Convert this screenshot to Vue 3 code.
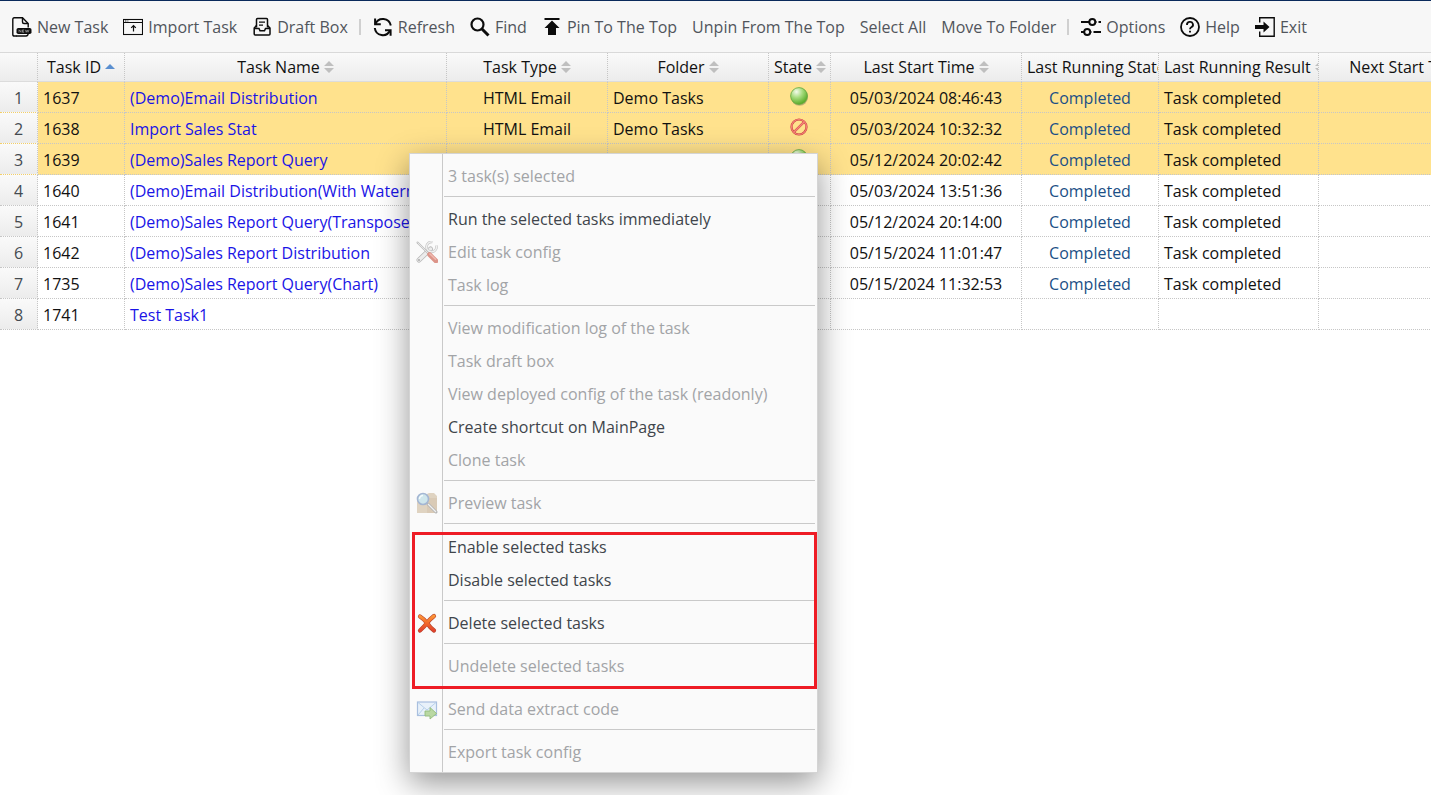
<script setup>
const tools = [
  { label: 'New Task', icon: 'new' },
  { label: 'Import Task', icon: 'import' },
  { label: 'Draft Box', icon: 'draft' },
  { divider: true },
  { label: 'Refresh', icon: 'refresh' },
  { label: 'Find', icon: 'find' },
  { label: 'Pin To The Top', icon: 'pin' },
  { label: 'Unpin From The Top' },
  { label: 'Select All' },
  { label: 'Move To Folder' },
  { divider: true },
  { label: 'Options', icon: 'options' },
  { label: 'Help', icon: 'help' },
  { label: 'Exit', icon: 'exit' }
]

const columns = [
  { label: 'Task ID', sorted: true },
  { label: 'Task Name' },
  { label: 'Task Type' },
  { label: 'Folder' },
  { label: 'State' },
  { label: 'Last Start Time' },
  { label: 'Last Running State' },
  { label: 'Last Running Result' },
  { label: 'Next Start Time' }
]

const rows = [
  { id: 1637, name: '(Demo)Email Distribution', type: 'HTML Email', folder: 'Demo Tasks', state: 'on', start: '05/03/2024 08:46:43', selected: true },
  { id: 1638, name: 'Import Sales Stat', type: 'HTML Email', folder: 'Demo Tasks', state: 'off', start: '05/03/2024 10:32:32', selected: true },
  { id: 1639, name: '(Demo)Sales Report Query', type: 'HTML Email', folder: 'Demo Tasks', state: 'on', start: '05/12/2024 20:02:42', selected: true },
  { id: 1640, name: '(Demo)Email Distribution(With Watermark)', start: '05/03/2024 13:51:36' },
  { id: 1641, name: '(Demo)Sales Report Query(Transpose)', start: '05/12/2024 20:14:00' },
  { id: 1642, name: '(Demo)Sales Report Distribution', start: '05/15/2024 11:01:47' },
  { id: 1735, name: '(Demo)Sales Report Query(Chart)', start: '05/15/2024 11:32:53' },
  { id: 1741, name: 'Test Task1' }
]

const sections = [
  { groups: [
    [{ label: '3 task(s) selected', off: true }],
    [{ label: 'Run the selected tasks immediately' }, { label: 'Edit task config', off: true, icon: 'tools' }, { label: 'Task log', off: true }],
    [
      { label: 'View modification log of the task', off: true },
      { label: 'Task draft box', off: true },
      { label: 'View deployed config of the task (readonly)', off: true },
      { label: 'Create shortcut on MainPage' },
      { label: 'Clone task', off: true }
    ],
    [{ label: 'Preview task', off: true, icon: 'preview' }]
  ] },
  { marked: true, groups: [
    [{ label: 'Enable selected tasks' }, { label: 'Disable selected tasks' }],
    [{ label: 'Delete selected tasks', icon: 'delete' }],
    [{ label: 'Undelete selected tasks', off: true }]
  ] },
  { groups: [
    [{ label: 'Send data extract code', off: true, icon: 'send' }],
    [{ label: 'Export task config', off: true }]
  ] }
]
</script>

<template>
  <div class="page">
    <nav class="toolbar">
      <template v-for="(t, i) in tools" :key="i">
        <span v-if="t.divider" class="divider"></span>
        <button v-else type="button" class="tool">
          <svg v-if="t.icon" class="tool-icon" viewBox="0 0 20 20" fill="none" stroke="#0c0c0c" stroke-width="1.5" aria-hidden="true">
            <g v-if="t.icon === 'new'">
              <path d="M5 19H2.2Q.8 19 .8 17.600V2.200Q.8.8 2.200.8H10.500L16.200 6.500V10.500" stroke-width="1.400" />
              <path d="M10.500 1V5Q10.500 6.500 12 6.500H16" stroke-width="1.400" />
              <rect x="4.500" y="11" width="15" height="6" rx="1.800" fill="#0c0c0c" stroke="none" />
              <path d="M4.500 19H14Q16.200 19 16.200 16" stroke-width="1.400" />
              <path d="M7 15.500V12.800L9 15.300V12.800M12.200 12.900H10.500V15.300H12.200M10.500 14.100H12M13.500 12.800L14.200 15.300L15.200 13.100L16 15.300L17 12.800" stroke="#bbb" stroke-width=".6" />
            </g>
            <g v-else-if="t.icon === 'import'">
              <rect x=".5" y="2.500" width="19" height="15" stroke-width="1.100" />
              <path d="M1 5.500H19" stroke-width="1" />
              <path d="M2 4H5.500" stroke-width=".9" stroke-dasharray="1 .6" />
              <path d="M10.500 14.500V9M8.200 10.800L10.500 8.500L12.800 10.800" stroke-width="1.200" />
            </g>
            <g v-else-if="t.icon === 'draft'">
              <path d="M4.500 10.500V2.500Q4.500 1.500 5.500 1.500H14.500Q15.500 1.500 15.500 2.500V10.500" />
              <path d="M7 5.200H13M7 8.200H11" stroke-width="1.300" />
              <path d="M4.500 8.500L2.200 11V17Q2.200 18 3.200 18H17Q18 18 18 17V11L15.500 8.500M2.200 11.500H7L8 13.800H12.500L13.500 11.500H18" />
            </g>
            <g v-else-if="t.icon === 'refresh'" stroke-width="2">
              <path d="M2.400 7.200A8 8 0 0 1 17.800 8.500" />
              <path d="M2.100 1.500V7.200H7.800" />
              <path d="M1.800 11A8 8 0 0 0 17 13.500" />
              <path d="M12 13.200H17.600V18.800" />
            </g>
            <g v-else-if="t.icon === 'find'">
              <circle cx="7.500" cy="7.500" r="6" stroke-width="2.200" />
              <path d="M12 12L18.500 18.500" stroke-width="3" />
            </g>
            <g v-else-if="t.icon === 'pin'" fill="#0c0c0c" stroke="none">
              <path d="M2.500 1H17.500V3H2.500ZM10 3.500L17.500 11H14V18H6V11H2.500Z" />
            </g>
            <g v-else-if="t.icon === 'options'" stroke-width="2">
              <path d="M0 5H8M14.500 5H15.500M17.500 5H20M0 15H3M9.500 15H20" stroke-width="1.800" />
              <circle cx="11.300" cy="5" r="3" />
              <circle cx="6.200" cy="15" r="3" />
              <path d="M10.500 15H12.500" stroke="#f7f7f7" />
            </g>
            <g v-else-if="t.icon === 'help'">
              <circle cx="10" cy="10" r="9" stroke-width="1.800" />
              <path d="M7 8A3 2.800 0 1 1 11.300 10.200Q10 11 10 12.200" stroke-width="1.800" />
              <path d="M10 13.800V15.600" stroke-width="1.900" />
            </g>
            <g v-else>
              <path d="M4.700 5.500V.8H19.200V19.200H4.700V14.500" stroke-width="1.400" />
              <path d="M0 8H8.500V4.500L14.500 10L8.500 15.500V12H0Z" fill="#0c0c0c" stroke="none" />
            </g>
          </svg>
          <span>{{ t.label }}</span>
        </button>
      </template>
    </nav>

    <div class="grid-wrap">
      <table class="grid">
        <colgroup>
          <col class="w-num" /><col class="w-id" /><col class="w-name" /><col class="w-mid" /><col class="w-mid" />
          <col class="w-state" /><col class="w-time" /><col class="w-run" /><col class="w-result" /><col class="w-time" />
        </colgroup>
        <thead>
          <tr>
            <th></th>
            <th v-for="c in columns" :key="c.label">
              <button type="button" class="sort">
                <span>{{ c.label }}</span>
                <svg class="arrows" viewBox="0 0 10 14" aria-hidden="true">
                  <path v-if="c.sorted" d="M0 9L5 4L10 9Z" fill="#5b8fd0" />
                  <path v-else d="M0 6L5 1L10 6ZM0 8H10L5 13Z" fill="#bfbfbf" />
                </svg>
              </button>
            </th>
          </tr>
        </thead>
        <tbody>
          <tr v-for="(r, i) in rows" :key="r.id" :class="{ selected: r.selected }">
            <th scope="row">{{ i + 1 }}</th>
            <td>{{ r.id }}</td>
            <td><a href="#" class="name">{{ r.name }}</a></td>
            <td class="center">{{ r.type }}</td>
            <td>{{ r.folder }}</td>
            <td class="center state-cell">
              <svg v-if="r.state === 'on'" class="state" viewBox="0 0 18 20" aria-hidden="true">
                <defs>
                  <radialGradient id="orb" cx=".35" cy=".25" r=".8">
                    <stop offset="0" stop-color="#f4fbec" /><stop offset=".45" stop-color="#a5db7c" /><stop offset="1" stop-color="#4fa51f" />
                  </radialGradient>
                </defs>
                <ellipse cx="9.500" cy="11" rx="8.500" ry="8.800" fill="#8a8a60" opacity=".55" />
                <circle cx="9" cy="10" r="8.400" fill="url(#orb)" stroke="#65a83d" stroke-width=".8" />
              </svg>
              <svg v-else-if="r.state === 'off'" class="state" viewBox="0 0 18 20" fill="none" aria-hidden="true">
                <path d="M14.500 4.500L3.500 15.500" stroke="#d5524a" stroke-width="2.400" />
                <circle cx="9" cy="10" r="7.500" stroke="#c9453c" stroke-width="2.200" />
                <circle cx="9" cy="10" r="7.500" stroke="#f6837a" stroke-width="1.200" />
                <path d="M14 5L4 15" stroke="#f6837a" stroke-width="1.200" />
              </svg>
            </td>
            <td class="center">{{ r.start }}</td>
            <td class="center"><a v-if="r.start" href="#" class="done">Completed</a></td>
            <td>{{ r.start ? 'Task completed' : '' }}</td>
            <td></td>
          </tr>
        </tbody>
      </table>
    </div>

    <div class="menu" role="menu">
      <div v-for="(s, si) in sections" :key="si" class="section" :class="{ marked: s.marked }">
        <div v-for="(g, gi) in s.groups" :key="gi" class="group">
          <button v-for="m in g" :key="m.label" type="button" role="menuitem" class="item" :disabled="m.off">
            <span class="slot">
              <svg v-if="m.icon === 'tools'" viewBox="0 0 22 22" fill="none" aria-hidden="true">
                <path d="M3 19L14.500 8" stroke="#b9b9b9" stroke-width="5" stroke-linecap="round" />
                <path d="M3 19L14.500 8" stroke="#ececec" stroke-width="3.400" stroke-linecap="round" />
                <path d="M20.300 4.500A5 5 0 1 1 16.500 1" stroke="#c3c3c3" stroke-width="2.600" />
                <path d="M20.300 4.500A5 5 0 1 1 16.500 1" stroke="#f0f0f0" stroke-width="1.400" />
                <circle cx="3" cy="19" r="1" fill="#aaa" />
                <path d="M1.500 1.500L12.500 12.500" stroke="#bdbdbd" stroke-width="2" stroke-linecap="round" />
                <path d="M1.500 1.500L12.500 12.500" stroke="#efefef" stroke-width=".8" />
                <path d="M13.500 13.500L20 20" stroke="#dc9489" stroke-width="4.600" stroke-linecap="round" />
                <path d="M13.500 12.500L20 18.800" stroke="#f0b9af" stroke-width="1.500" />
              </svg>
              <svg v-else-if="m.icon === 'preview'" viewBox="0 0 22 22" fill="none" aria-hidden="true">
                <path d="M1 6H11V2L13 1H18L21 4V21H1Z" fill="#dfd3c1" />
                <path d="M11 6H21V21H11Z" fill="#d9cab6" />
                <path d="M12 12L20 20" stroke="#b5b5b5" stroke-width="3" stroke-linecap="round" />
                <path d="M12 12L20 20" stroke="#f0f0f0" stroke-width="1.300" />
                <circle cx="7" cy="7" r="5.500" fill="#cfe6ec" stroke="#a4b6d3" stroke-width="1.600" />
                <path d="M3.500 7A3.500 3.500 0 0 1 7 3.500" stroke="#f4fbfc" stroke-width="1.400" />
              </svg>
              <svg v-else-if="m.icon === 'delete'" viewBox="0 0 22 22" fill="none" stroke-linecap="round" aria-hidden="true">
                <defs>
                  <linearGradient id="cross" x1="0" y1="2" x2="0" y2="20" gradientUnits="userSpaceOnUse">
                    <stop offset="0" stop-color="#ffa13a" /><stop offset=".5" stop-color="#f26a2b" /><stop offset="1" stop-color="#dd3b2c" />
                  </linearGradient>
                </defs>
                <path d="M4 4.500Q8 7 11 11Q14 15.500 18 18.500M18 4Q13 8 11 11Q8 15 4 18.500" stroke="#b8432c" stroke-width="4.200" />
                <path d="M4 4.500Q8 7 11 11Q14 15.500 18 18.500M18 4Q13 8 11 11Q8 15 4 18.500" stroke="url(#cross)" stroke-width="3" />
              </svg>
              <svg v-else-if="m.icon === 'send'" viewBox="0 0 22 22" fill="none" aria-hidden="true">
                <rect x="1.500" y="4" width="19" height="13.500" fill="#e8f1fa" stroke="#a9bfdf" stroke-width="1.200" />
                <path d="M2 4.500L11 12L20 4.500M2 17L8 10M20 17L14 10" stroke="#b7d0ea" />
                <path d="M9 13H14V9.500L20.500 15.500L14 21V18H9Z" fill="#b9d8a3" stroke="#93bd7a" stroke-width=".9" />
              </svg>
            </span>
            <span>{{ m.label }}</span>
          </button>
        </div>
      </div>
    </div>
  </div>
</template>

<style>
body {
  background: #fff;
  overflow: hidden;
}
</style>

<style scoped>
.page {
  position: relative;
  min-height: 100vh;
  overflow: hidden;
  color: #111;
  font: 16px/20px "Open Sans", "Noto Sans", sans-serif;
}
button {
  margin: 0;
  border: 0;
  background: none;
  font: inherit;
  color: inherit;
  white-space: nowrap;
}
a { text-decoration: none; }
.toolbar {
  display: flex;
  align-items: center;
  height: 51px;
  padding-left: 5px;
  border-top: 1px solid #0a2a5c;
  border-bottom: 1px solid #d9d9d9;
  background: #f7f7f7;
  color: #51555c;
}
.tool {
  display: flex;
  flex: none;
  align-items: center;
  gap: 5px;
  padding: 0 8px 0 7px;
}
.tool-icon {
  width: 20px;
  height: 20px;
}
.divider {
  flex: none;
  width: 2px;
  height: 16px;
  margin: 0 5px 0 3px;
  background: #d0d0d0;
}
.grid-wrap { overflow: hidden; }
.grid {
  width: 1510px;
  table-layout: fixed;
  border-collapse: separate;
  border-spacing: 0;
}
.w-num { width: 38px; }
.w-id { width: 87px; }
.w-name { width: 322px; }
.w-mid { width: 161px; }
.w-state { width: 62px; }
.w-time { width: 191px; }
.w-run { width: 137px; }
.w-result { width: 160px; }
th, td {
  box-sizing: border-box;
  height: 31px;
  padding: 1px 5px 0;
  border-right: 1px dotted #c6c6c6;
  border-bottom: 1px dotted #c6c6c6;
  overflow: hidden;
  text-align: left;
  font-weight: 400;
  white-space: nowrap;
}
thead th {
  height: 29px;
  padding: 0 5px 2px;
  border-bottom: 1px solid #dcdcdc;
  background: linear-gradient(#fafafa, #ececec);
  text-align: center;
}
tbody th {
  background: linear-gradient(#fafafa, #ececec);
  color: #444a50;
  text-align: center;
}
.selected td { background: #ffe28d; }
.selected th { border-bottom-color: #f3cf68; }
td.center { text-align: center; }
td.state-cell { padding: 0 6px 3px 5px; }
.sort {
  display: inline-flex;
  align-items: center;
  gap: 4px;
  padding: 0;
  vertical-align: middle;
}
.arrows {
  flex: none;
  width: 10px;
  height: 14px;
}
.name { color: #1a14e6; }
.done { color: #1b4f86; }
.state {
  width: 18px;
  height: 20px;
  vertical-align: middle;
}
.menu {
  position: absolute;
  top: 153px;
  left: 409px;
  width: 407px;
  padding: 5px 0 4px;
  border: 1px solid #d4d4d4;
  background: linear-gradient(90deg, #fafafa 32px, #c9c9c9 32px, #c9c9c9 33px, #fafafa 33px);
  box-shadow: 0 10px 30px rgba(0, 0, 0, 0.42);
}
.section {
  position: relative;
  display: flow-root;
}
.marked { margin-top: 1px; }
.marked::after {
  content: "";
  position: absolute;
  inset: 2px 0 3px 2px;
  border: 3px solid #ee1c25;
  pointer-events: none;
}
.group::after {
  content: "";
  display: block;
  height: 1px;
  margin: 4px 2px 5px 34px;
  background: #c9c9c9;
}
.section:last-child .group:last-child::after { display: none; }
.item {
  display: flex;
  align-items: center;
  width: 100%;
  height: 33px;
  padding: 0;
  color: #40454b;
}
.item:disabled { color: #a2a4a7; }
.slot {
  display: flex;
  flex: none;
  justify-content: center;
  width: 34px;
  margin-right: 4px;
}
.slot svg {
  width: 22px;
  height: 22px;
}
</style>
